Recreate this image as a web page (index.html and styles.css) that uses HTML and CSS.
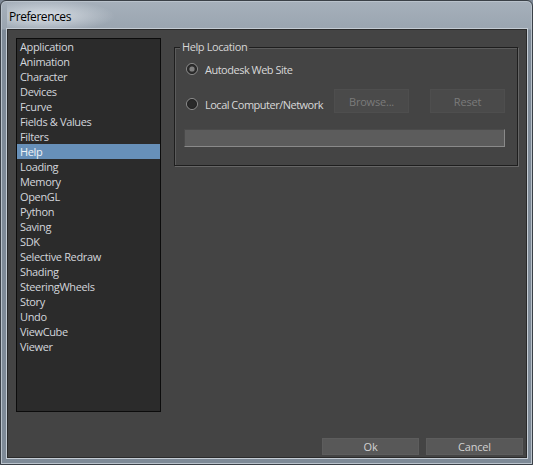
FILE: index.html
```html
<!DOCTYPE html>
<html>
<head>
<meta charset="utf-8">
<title>Preferences</title>
<link rel="stylesheet" href="styles.css">
</head>
<body>
<div class="window">
  <div class="titlebar"><span class="title">Preferences</span></div>
  <div class="client">
    <div class="main">
      <ul class="list">
        <li>Application</li>
        <li>Animation</li>
        <li>Character</li>
        <li>Devices</li>
        <li>Fcurve</li>
        <li>Fields &amp; Values</li>
        <li>Filters</li>
        <li class="selected">Help</li>
        <li>Loading</li>
        <li>Memory</li>
        <li>OpenGL</li>
        <li>Python</li>
        <li>Saving</li>
        <li>SDK</li>
        <li>Selective Redraw</li>
        <li>Shading</li>
        <li>SteeringWheels</li>
        <li>Story</li>
        <li>Undo</li>
        <li>ViewCube</li>
        <li>Viewer</li>
      </ul>
      <div class="right">
        <div class="group">
          <span class="legend">Help Location</span>
          <div class="row row1">
            <span class="radio">
              <svg width="12" height="12" viewBox="0 0 12 12"><circle cx="6" cy="6" r="5.5" fill="#2e2e2e" stroke="#8e8e8e" stroke-width="1"/><circle cx="6" cy="6" r="4.3" fill="none" stroke="#262626" stroke-width="1"/><circle cx="6" cy="6" r="2.6" fill="#808080"/></svg>
            </span>
            <span class="label">Autodesk Web Site</span>
          </div>
          <div class="row row2">
            <div class="radio-item">
              <span class="radio">
                <svg width="12" height="12" viewBox="0 0 12 12"><circle cx="6" cy="6" r="5.5" fill="#2a2a2a" stroke="#8e8e8e" stroke-width="1"/><circle cx="6" cy="6" r="4.3" fill="none" stroke="#242424" stroke-width="1"/></svg>
              </span>
              <span class="label">Local Computer/Network</span>
            </div>
            <button class="btn disabled browse">Browse...</button>
            <button class="btn disabled">Reset</button>
          </div>
          <div class="field"></div>
        </div>
      </div>
    </div>
    <div class="footer">
      <button class="btn action">Ok</button>
      <button class="btn action">Cancel</button>
    </div>
  </div>
</div>
</body>
</html>
```
FILE: styles.css
```css
html, body {
  margin: 0;
  padding: 0;
  background: #7d8895;
}
body {
  width: 533px;
  height: 465px;
  overflow: hidden;
  font-family: "Open Sans", "Liberation Sans", sans-serif;
}
.window {
  box-sizing: border-box;
  width: 533px;
  height: 465px;
  border: 1px solid #3a4047;
  border-radius: 6px 6px 0 0;
  box-shadow: inset 0 0 0 1px #b9c2cb;
  background: linear-gradient(to bottom, #a6b0bb 0, #9aa5b0 28px, #7e8a97 29px, #7e8a97 100%);
  padding: 0 5px 6px 6px;
  display: flex;
  flex-direction: column;
}
.titlebar {
  height: 28px;
  display: flex;
  align-items: center;
  padding-left: 2px;
  background: radial-gradient(ellipse 70px 16px at 38px 15px, rgba(235,240,245,0.75), rgba(235,240,245,0) 100%);
}
.title {
  font-size: 12px;
  color: #000;
  letter-spacing: -0.45px;
  margin-top: 2px;
}
.client {
  flex: 1;
  box-sizing: border-box;
  background: #444444;
  border: 1px solid #2a2a2a;
  box-shadow: 0 0 0 1px #c4ccd4;
  display: flex;
  flex-direction: column;
  padding: 8px 3px 2px 8px;
}
.main {
  display: flex;
  flex-direction: row;
  align-items: flex-start;
}
.list {
  list-style: none;
  margin: 0;
  padding: 0;
  box-sizing: border-box;
  width: 145px;
  height: 374px;
  background: #2b2b2b;
  border: 1px solid #0c0c0c;
}
.list li {
  height: 15px;
  line-height: 15px;
  padding-left: 3px;
  font-size: 11px;
  letter-spacing: -0.35px;
  color: #d3d6dc;
  white-space: nowrap;
}
.list li.selected {
  background: #6790b9;
  color: #eef2f6;
}
.right {
  margin-left: 13px;
  padding-top: 9px;
}
.group {
  position: relative;
  box-sizing: border-box;
  width: 344px;
  border: 1px solid #1e1e1e;
  box-shadow: 1px 1px 0 #666666, inset 1px 1px 0 #5c5c5c;
  padding: 0 12px 18px 9px;
}
.legend {
  position: absolute;
  top: -8px;
  left: 5px;
  padding: 0 2px;
  background: #444444;
  font-size: 11px;
  line-height: 14px;
  letter-spacing: -0.4px;
  color: #d6d6d6;
}
.row {
  display: flex;
  align-items: center;
}
.row1 {
  margin-top: 14px;
  height: 14px;
}
.row2 {
  margin-top: 13px;
  height: 24px;
  align-items: flex-start;
}
.radio-item {
  display: flex;
  align-items: center;
  height: 14px;
  margin-top: 8px;
  margin-right: auto;
}
.radio {
  display: flex;
  width: 12px;
  height: 12px;
  margin-left: 2px;
}
.label {
  margin-left: 7px;
  font-size: 11px;
  letter-spacing: -0.5px;
  color: #d8d8d8;
  white-space: nowrap;
}
.btn {
  font-family: "Open Sans", "Liberation Sans", sans-serif;
  font-size: 11px;
  letter-spacing: -0.2px;
  padding: 0;
  margin: 0;
  box-sizing: border-box;
}
.btn.disabled {
  width: 75px;
  height: 24px;
  background: #4a4a4a;
  border: 1px solid #4e4e4e;
  color: #7b7b7b;
}
.btn.browse {
  margin-right: 21px;
}
.field {
  margin-top: 16px;
  box-sizing: border-box;
  height: 18px;
  width: 321px;
  background: #5c5c5c;
  border-top: 1px solid #4a4a4a;
  border-left: 1px solid #4a4a4a;
  border-right: 1px solid #8a8a8a;
  border-bottom: 1px solid #8a8a8a;
}
.footer {
  margin-top: auto;
  display: flex;
  justify-content: flex-end;
  gap: 7px;
}
.btn.action {
  width: 97px;
  height: 17px;
  background: #585858;
  border: 1px solid #5d5d5d;
  color: #d2d2d2;
  line-height: 14px;
}
```
